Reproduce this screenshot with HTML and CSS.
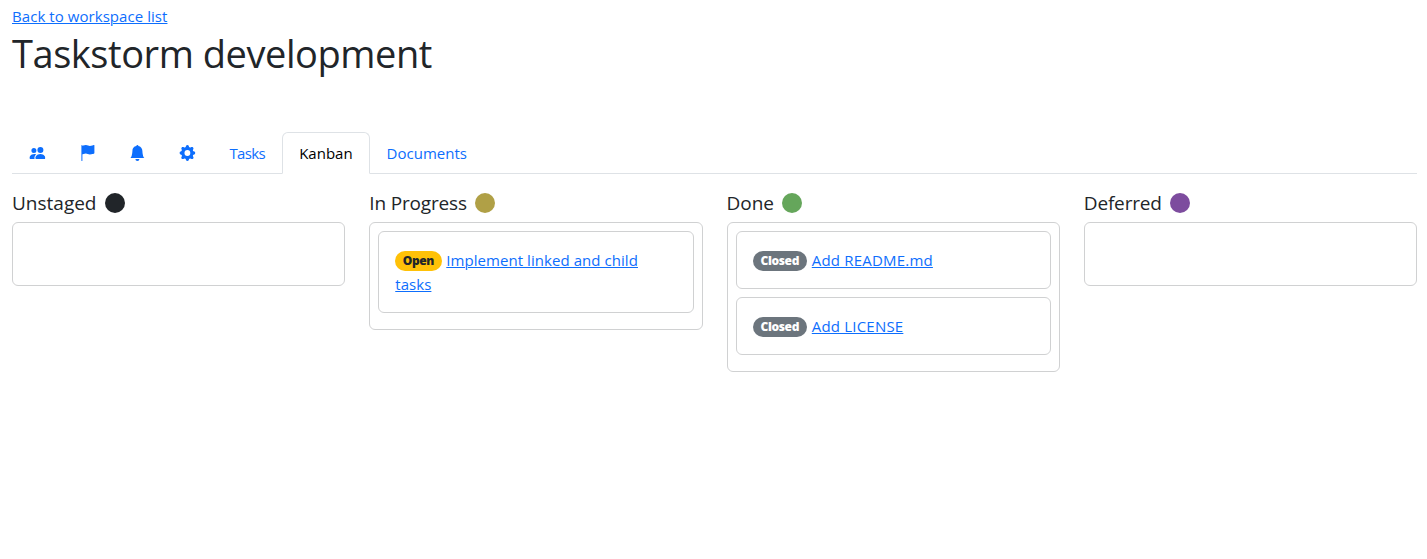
FILE: index.html
```html
<!DOCTYPE html>
<html lang="en">
<head>
<meta charset="utf-8">
<title>Taskstorm development</title>
<link rel="stylesheet" href="styles.css">
</head>
<body>
<header class="page-header">
  <a class="back" href="#">Back to workspace list</a>
  <h1>Taskstorm development</h1>
</header>
<nav class="tabs">
  <a class="tab" href="#"><svg class="icon" viewBox="0 0 16 16"><path d="M7 14s-1 0-1-1 1-4 5-4 5 3 5 4-1 1-1 1zm4-6a3 3 0 1 0 0-6 3 3 0 0 0 0 6m-5.784 6A2.24 2.24 0 0 1 5 13c0-1.355.68-2.75 1.936-3.72A6.3 6.3 0 0 0 5 9c-4 0-5 3-5 4s1 1 1 1zM4.5 8a2.5 2.5 0 1 0 0-5 2.5 2.5 0 0 0 0 5"/></svg></a>
  <a class="tab" href="#"><svg class="icon" viewBox="0 0 16 16"><path d="M14.778.085A.5.5 0 0 1 15 .5V8a.5.5 0 0 1-.314.464L14.5 8l.186.464-.003.001-.006.003-.023.009a12 12 0 0 1-.397.15c-.264.095-.631.223-1.047.35-.816.252-1.879.523-2.71.523-.847 0-1.548-.28-2.158-.525l-.028-.01C7.68 8.71 7.14 8.5 6.5 8.5c-.7 0-1.638.23-2.437.477A20 20 0 0 0 3 9.342V15.5a.5.5 0 0 1-1 0V.5a.5.5 0 0 1 1 0v.282c.226-.079.496-.17.79-.26C4.606.272 5.67 0 6.5 0c.84 0 1.524.277 2.121.519l.043.018C9.286.788 9.828 1 10.5 1c.7 0 1.638-.23 2.437-.477a20 20 0 0 0 1.349-.476l.019-.007.004-.002h.001"/></svg></a>
  <a class="tab" href="#"><svg class="icon" viewBox="0 0 16 16"><path d="M8 16a2 2 0 0 0 2-2H6a2 2 0 0 0 2 2m.995-14.901a1 1 0 1 0-1.99 0A5 5 0 0 0 3 6c0 1.098-.5 6-2 7h14c-1.5-1-2-5.902-2-7 0-2.42-1.72-4.44-4.005-4.901"/></svg></a>
  <a class="tab" href="#"><svg class="icon" viewBox="0 0 16 16"><path d="M9.405 1.05c-.413-1.4-2.397-1.4-2.81 0l-.1.34a1.464 1.464 0 0 1-2.105.872l-.31-.17c-1.283-.698-2.686.705-1.987 1.987l.169.311c.446.82.023 1.841-.872 2.105l-.34.1c-1.4.413-1.4 2.397 0 2.81l.34.1a1.464 1.464 0 0 1 .872 2.105l-.17.31c-.698 1.283.705 2.686 1.987 1.987l.311-.169a1.464 1.464 0 0 1 2.105.872l.1.34c.413 1.4 2.397 1.4 2.81 0l.1-.34a1.464 1.464 0 0 1 2.105-.872l.31.17c1.283.698 2.686-.705 1.987-1.987l-.169-.311a1.464 1.464 0 0 1 .872-2.105l.34-.1c1.4-.413 1.4-2.397 0-2.81l-.34-.1a1.464 1.464 0 0 1-.872-2.105l.17-.31c.698-1.283-.705-2.686-1.987-1.987l-.311.169a1.464 1.464 0 0 1-2.105-.872zM8 10.93a2.929 2.929 0 1 1 0-5.86 2.929 2.929 0 0 1 0 5.858z"/></svg></a>
  <a class="tab tight" href="#">Tasks</a>
  <a class="tab active" href="#">Kanban</a>
  <a class="tab" href="#">Documents</a>
</nav>
<main class="board">
  <section>
    <h2>Unstaged<i class="dot dark"></i></h2>
    <div class="lane"></div>
  </section>
  <section>
    <h2 class="narrow">In Progress<i class="dot gold"></i></h2>
    <div class="lane">
      <article class="card"><span class="badge open">Open</span> <a href="#">Implement linked and child tasks</a></article>
    </div>
  </section>
  <section>
    <h2>Done<i class="dot green"></i></h2>
    <div class="lane">
      <article class="card"><span class="badge closed">Closed</span> <a class="wide" href="#">Add README.md</a></article>
      <article class="card"><span class="badge closed">Closed</span> <a class="wide" href="#">Add LICENSE</a></article>
    </div>
  </section>
  <section>
    <h2 class="narrow">Deferred<i class="dot purple"></i></h2>
    <div class="lane"></div>
  </section>
</main>
</body>
</html>
```
FILE: styles.css
```css
* { box-sizing: border-box; }
body { margin: 0; padding: 4px 10px 0 12px; background: #fff; color: #212529; font: 15px/24px "Open Sans", "Noto Sans", sans-serif; }
a { color: #0d6efd; text-underline-offset: 1px; text-decoration-thickness: 1px; }
.page-header { height: 128px; }
.back { display: block; letter-spacing: .06px; }
h1 { margin: 1px 0 0; font-size: 38px; font-weight: 400; line-height: 48px; letter-spacing: -.44px; }
.tabs { display: flex; height: 42px; border-bottom: 1px solid #dee2e6; }
.tab { display: flex; align-items: center; height: 42px; padding: 0 16px; border: 1px solid transparent; border-radius: 6px 6px 0 0; text-decoration: none; }
.tab.tight { padding-left: 16.4px; letter-spacing: -.6px; }
.tab.active { color: #000; background: #fff; border-color: #dee2e6 #dee2e6 #fff; }
.icon { width: 16px; height: 16px; fill: currentColor; transform: translateX(.4px); }
.board { display: grid; grid-template-columns: repeat(4, 1fr); gap: 24px; align-items: start; padding-top: 17px; }
h2 { display: flex; align-items: center; gap: 8px; height: 24px; margin: 0 0 7px; font-size: 19px; font-weight: 400; line-height: 24px; }
.narrow { letter-spacing: -.16px; }
.dot { width: 20px; height: 20px; border-radius: 50%; }
.dark { background: #212529; }
.gold { background: #b0a046; }
.green { background: #65a65b; }
.purple { background: #7d4c9e; }
.lane { min-height: 64px; padding: 8px 8px 16px; border: 1px solid #d0d1d2; border-radius: 6px; }
.card { padding: 16px; border: 1px solid #d0d1d2; border-radius: 6px; }
.card a { letter-spacing: .06px; }
.card a.wide { letter-spacing: .2px; }
.card + .card { margin-top: 8px; }
.badge { display: inline-block; margin-right: .8px; padding: 4px 7.6px; border-radius: 10px; font-size: 12px; font-weight: 800; line-height: 12px; letter-spacing: -.4px; vertical-align: .8px; }
.open { background: #ffc107; color: #212529; }
.closed { padding: 4px 8px; background: #6c757d; color: #fff; letter-spacing: -.35px; }
```
